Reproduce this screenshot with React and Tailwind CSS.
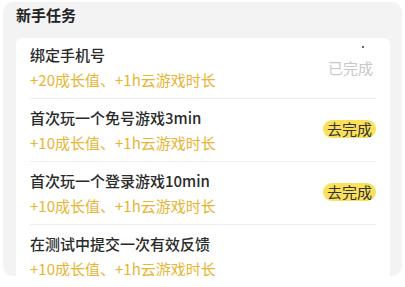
const tasks = [
  { title: "绑定手机号", reward: "+20成长值、+1h云游戏时长", done: true },
  { title: "首次玩一个免号游戏3min", reward: "+10成长值、+1h云游戏时长", done: false },
  { title: "首次玩一个登录游戏10min", reward: "+10成长值、+1h云游戏时长", done: false },
  { title: "在测试中提交一次有效反馈", reward: "+10成长值、+1h云游戏时长", done: false },
];

export default function App() {
  return (
    <div
      className="w-[405px] h-[287px] bg-white pt-[2px] px-[3px]"
      style={{ fontFamily: '"Noto Sans CJK SC", "Noto Sans", sans-serif' }}
    >
      <div className="h-[274px] bg-[#f3f3f3] rounded-[10px] overflow-hidden pl-[13px] pr-[12px]">
        {/* HEADER */}
        <div className="h-[36px] flex items-center">
          <h2 className="text-[15px] leading-[20px] font-semibold text-[#222] mt-[-10px]">新手任务</h2>
        </div>

        {/* TASK LIST */}
        <div className="bg-white rounded-[6px]">
          {tasks.map((t, i) => (
            <div
              key={i}
              className={`mx-[14px] flex items-center justify-between border-b border-[#efefef] pb-[8px] ${
                i === 0 ? "pt-[7px]" : "pt-[9px]"
              }`}
            >
              <div className="flex flex-col gap-[5px]">
                <div className="text-[15px] leading-[20px] font-medium text-[#2a2a2a]">{t.title}</div>
                <div className="text-[15px] leading-[20px] text-[#e8b432]">{t.reward}</div>
              </div>
              {i < 3 &&
                (t.done ? (
                  <div className="relative text-[15px] leading-[20px] text-[#c8c8c8] mr-[3px]">
                    已完成
                    <span className="absolute right-[9px] top-[-12px] w-[2px] h-[2px] rounded-full bg-[#333]" />
                  </div>
                ) : (
                  <div className="bg-[#fbe05a] rounded-full px-[4px] h-[18px] flex items-center text-[15px] leading-[18px] text-[#333] mt-[-3px]">
                    去完成
                  </div>
                ))}
            </div>
          ))}
        </div>
      </div>
    </div>
  );
}
